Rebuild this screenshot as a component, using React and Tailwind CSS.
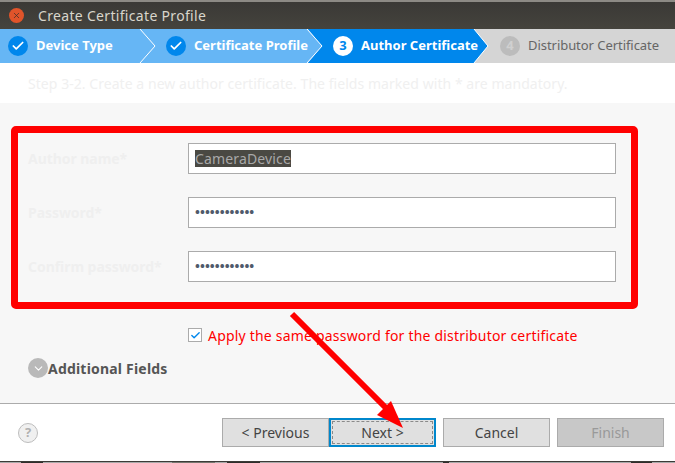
import React from 'react';
import { Check, ChevronDown, X } from 'lucide-react';

const font = 'font-["Noto_Sans",sans-serif]';

// strip of the desktop showing under the window
const desktop = [
  { w: 21, c: 'bg-[#a9a9a9]' },
  { w: 22, c: 'bg-[#2f2e2b]' },
  { w: 129, c: 'bg-[#a9a9a9]' },
  { w: 43, c: 'bg-[#77766f]' },
  { w: 12, c: 'bg-[#a9a9a9]' },
  { w: 33, c: 'bg-[#2f2e2b]' },
  { w: 183, c: 'bg-[#a9a9a9]' },
  { w: 6, c: 'bg-[#2f2e2b]' },
  { w: 182, c: 'bg-[#a9a9a9]' },
  { w: 21, c: 'bg-[#2f2e2b]' },
  { w: 23, c: 'bg-[#a9a9a9]' },
];

const Field = ({ label, value, selected, dots }) => {
  return (
    <div className="flex items-center h-[31px]">
      <div className="w-[160px] text-[14px] font-bold text-[#efefef] tracking-[-0.05px]">{label}</div>
      <div className="w-[428px] h-[31px] bg-white border border-[#ababab] flex items-center pl-[6px] text-[14px] text-[#666]">
        {selected && <span className="bg-[#4a4943] text-[#a8a8a8] h-[17px] flex items-center leading-none tracking-[0.15px]">{value}</span>}
        {dots && <span className="text-[#4f5a6b] text-[13px] font-bold leading-none tracking-[0.05px]">{value}</span>}
      </div>
    </div>
  );
};

const Step = ({ done, num, label, width, bg, active }) => {
  return (
    <div className={`flex items-center h-[34px] ${width} ${bg}`}>
      {done && (
        <div className="shrink-0 w-5 h-5 ml-2 rounded-full bg-[#0087ec] flex items-center justify-center">
          <Check size={14} strokeWidth={3} className="text-white" />
        </div>
      )}
      {active && (
        <div className="shrink-0 w-5 h-5 ml-[25px] rounded-full bg-white flex items-center justify-center text-[#0087ec] text-[13px] font-bold">{num}</div>
      )}
      <span className="relative z-10 ml-[8px] text-[13px] font-bold text-white tracking-[0px] whitespace-nowrap">{label}</span>
    </div>
  );
};

const Btn = ({ children, className }) => {
  return (
    <button className={`h-[29px] w-[107px] border text-[14px] flex items-center justify-center ${className}`}>{children}</button>
  );
};

export default function App() {
  return (
    <div className={`relative w-[675px] h-[463px] overflow-hidden bg-white ${font}`}>
      {/* title bar */}
      <div className="h-[29px] bg-gradient-to-b from-[#3a3936] to-[#45433d] border-t-2 border-[#8c8a85] flex items-center">
        <div className="ml-[9px] w-[15px] h-[15px] rounded-full bg-[#e0542a] flex items-center justify-center">
          <X size={9} strokeWidth={2} className="text-[#40302a]" />
        </div>
        <div className="ml-[14px] text-[14px] text-[#d9d6cc] tracking-[0.32px]">Create Certificate Profile</div>
      </div>

      {/* stepper */}
      <div className="relative flex h-[34px] bg-[#d5d5d5]">
        <Step done label="Device Type" width="w-[158px]" bg="bg-[#66b6f5]" />
        <Step done label="Certificate Profile" width="w-[150px]" bg="bg-[#66b6f5]" />
        <Step active num="3" label="Author Certificate" width="w-[167px]" bg="bg-[#0087ec]" />
        <div className="flex items-center flex-1 pl-[25px]">
          <div className="w-5 h-5 rounded-full bg-[#bcbcbc] flex items-center justify-center text-[#d0d0d0] text-[13px] font-bold">4</div>
          <span className="ml-[8px] text-[13px] text-[#666] tracking-[-0.05px] whitespace-nowrap">Distributor Certificate</span>
        </div>
        {/* chevrons between the steps */}
        <svg className="absolute left-0 top-0" width="675" height="34" viewBox="0 0 675 34" fill="none">
          <path d="M308 0 L322 17 L308 34 Z" fill="#66b6f5" />
          <path d="M474 0 L488 17 L474 34 Z" fill="#0087ec" />
          <path d="M140 0 L155 17 L140 34" stroke="#fff" strokeWidth="1" />
          <path d="M307 0 L322 17 L307 34" stroke="#fff" strokeWidth="1" />
          <path d="M474 0 L488 17 L474 34" stroke="#fff" strokeWidth="1" />
        </svg>
      </div>

      {/* step hint */}
      <div className="h-[40px] flex items-center pl-[28px] text-[14px] text-[#f0f0f0] tracking-[0.05px] whitespace-nowrap">
        Step 3-2. Create a new author certificate. The fields marked with * are mandatory.
      </div>

      {/* form */}
      <div className="h-[301px] bg-[#f7f7f7] border-b border-[#ababab] pl-[28px] pt-[40px]">
        <div className="flex flex-col gap-[23px]">
          <Field label="Author name*" value="CameraDevice" selected />
          <Field label="Password*" value="••••••••••••" dots />
          <Field label="Confirm password*" value="••••••••••••" dots />
        </div>
        <div className="flex items-center mt-[45px] ml-[160px] h-[16px]">
          <div className="w-[14px] h-[14px] bg-white border border-[#ababab] flex items-center justify-center">
            <Check size={11} strokeWidth={3} className="text-[#0087ec]" />
          </div>
          <span className="ml-[6px] text-[14px] text-[#ff0000] tracking-[0.2px] whitespace-nowrap">Apply the same password for the distributor certificate</span>
        </div>
        <div className="flex items-center mt-[15px] h-[20px]">
          <div className="w-5 h-5 rounded-full bg-[#b9b9b9] flex items-center justify-center">
            <ChevronDown size={13} strokeWidth={2} className="text-white" />
          </div>
          <span className="text-[14px] font-bold text-[#555] tracking-[0.2px]">Additional Fields</span>
        </div>
      </div>

      {/* footer */}
      <div className="h-[57px] flex items-center pl-[18px]">
        <div className="w-5 h-5 rounded-full border border-[#bdbdbd] bg-[#f0f0f0] flex items-center justify-center text-[13px] font-bold text-[#b0b0b0]">?</div>
        <div className="ml-[184px] flex items-center">
          <Btn className="bg-[#e0e0e0] border-[#ababab] text-[#444]">&lt; Previous</Btn>
          <div className="w-[107px] h-[29px] border-2 border-[#0087cc] bg-[#e0e0e0] p-[1px]">
            <div className="w-full h-full border border-dashed border-[#8a8a8a] flex items-center justify-center text-[14px] text-[#444]">Next &gt;</div>
          </div>
          <Btn className="ml-[7px] bg-[#e0e0e0] border-[#ababab] text-[#444]">Cancel</Btn>
          <Btn className="ml-[7px] bg-[#c8c8c8] border-[#ababab] text-[#999]">Finish</Btn>
        </div>
      </div>
      <div className="h-px bg-[#3c3b37]" />
      <div className="h-px flex">
        {desktop.map((d, i) => (
          <div key={i} className={d.c} style={{ width: d.w }} />
        ))}
      </div>

      {/* red annotation */}
      <div className="absolute left-[11px] top-[126px] w-[627px] h-[183px] border-[7px] border-[#ff0000] rounded-[5px]" />
      <svg className="absolute left-0 top-0 pointer-events-none" width="675" height="463" viewBox="0 0 675 463" fill="none">
        <path d="M292 314 L386 408" stroke="#ff0000" strokeWidth="6" />
        <path d="M377 415 L391 401 L403 428 Z" fill="#ff0000" />
      </svg>
    </div>
  );
}
